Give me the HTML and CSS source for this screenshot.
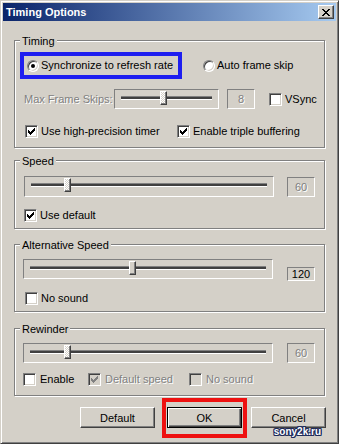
FILE: index.html
```html
<!DOCTYPE html>
<html lang="en">

<head>
    <meta charset="UTF-8">
    <meta name="viewport" content="width=device-width, initial-scale=1.0">
    <title>Timing Options</title>
    <link rel="stylesheet" href="styles.css">
</head>

<body>

    <div class="window">
        <div class="titlebar">
            <span class="title">Timing Options</span>
            <button class="close" type="button">
                <svg width="8" height="7" viewBox="0 0 8 7"><path d="M0 0h2v1H0z M6 0h2v1H6z M1 1h2v1H1z M5 1h2v1H5z M2 2h4v1H2z M3 3h2v1H3z M2 4h4v1H2z M1 5h2v1H1z M5 5h2v1H5z M0 6h2v1H0z M6 6h2v1H6z" fill="#000"/></svg>
            </button>
        </div>

        <div class="client">
            <!-- Timing -->
            <div class="group timing">
                <div class="group-title">Timing</div>
                <div class="row sync-row">
                    <div class="mark-blue">
                        <span class="opt"><span class="radio on"></span>Synchronize to refresh rate</span>
                    </div>
                    <span class="opt auto-skip"><span class="radio"></span>Auto frame skip</span>
                </div>
                <div class="row skips-row">
                    <span class="skips-label off">Max Frame Skips:</span>
                    <div class="slider skips off">
                        <div class="channel"></div>
                        <div class="thumb" style="left: 45px"></div>
                    </div>
                    <div class="edit skips-edit off">8</div>
                    <span class="opt vsync"><span class="check"></span>VSync</span>
                </div>
                <div class="row checks-row">
                    <span class="opt precision">
                        <span class="check"><svg width="7" height="7" viewBox="0 0 7 7"><path d="M0 2h1v3H0z M1 3h1v3H1z M2 4h1v3H2z M3 3h1v3H3z M4 2h1v3H4z M5 1h1v3H5z M6 0h1v3H6z" fill="#000"/></svg></span>Use high-precision timer
                    </span>
                    <span class="opt">
                        <span class="check"><svg width="7" height="7" viewBox="0 0 7 7"><path d="M0 2h1v3H0z M1 3h1v3H1z M2 4h1v3H2z M3 3h1v3H3z M4 2h1v3H4z M5 1h1v3H5z M6 0h1v3H6z" fill="#000"/></svg></span>Enable triple buffering
                    </span>
                </div>
            </div>

            <!-- Speed -->
            <div class="group speed">
                <div class="group-title">Speed</div>
                <div class="row slider-row">
                    <div class="slider wide off">
                        <div class="channel"></div>
                        <div class="thumb" style="left: 39px"></div>
                    </div>
                    <div class="edit off">60</div>
                </div>
                <div class="row check-row">
                    <span class="opt">
                        <span class="check"><svg width="7" height="7" viewBox="0 0 7 7"><path d="M0 2h1v3H0z M1 3h1v3H1z M2 4h1v3H2z M3 3h1v3H3z M4 2h1v3H4z M5 1h1v3H5z M6 0h1v3H6z" fill="#000"/></svg></span>Use default
                    </span>
                </div>
            </div>

            <!-- Alternative Speed -->
            <div class="group alt">
                <div class="group-title">Alternative Speed</div>
                <div class="row slider-row">
                    <div class="slider wide">
                        <div class="channel"></div>
                        <div class="thumb" style="left: 105px"></div>
                    </div>
                    <div class="edit static">120</div>
                </div>
                <div class="row check-row">
                    <span class="opt"><span class="check"></span>No sound</span>
                </div>
            </div>

            <!-- Rewinder -->
            <div class="group rewinder">
                <div class="group-title">Rewinder</div>
                <div class="row slider-row">
                    <div class="slider wide off">
                        <div class="channel"></div>
                        <div class="thumb" style="left: 40px"></div>
                    </div>
                    <div class="edit off">60</div>
                </div>
                <div class="row check-row">
                    <span class="opt enable"><span class="check"></span>Enable</span>
                    <span class="opt def-speed off">
                        <span class="check"><svg width="7" height="7" viewBox="0 0 7 7"><path d="M0 2h1v3H0z M1 3h1v3H1z M2 4h1v3H2z M3 3h1v3H3z M4 2h1v3H4z M5 1h1v3H5z M6 0h1v3H6z" fill="#808080"/></svg></span>Default speed
                    </span>
                    <span class="opt off"><span class="check"></span>No sound</span>
                </div>
            </div>

            <div class="buttons">
                <button class="btn" type="button">Default</button>
                <div class="mark-red">
                    <button class="btn default" type="button">OK</button>
                </div>
                <button class="btn" type="button">Cancel</button>
            </div>
        </div>

        <div class="watermark">sony2k.ru</div>
    </div>

</body>

</html>
```

FILE: styles.css
```css
* {
    box-sizing: border-box;
}

body {
    margin: 0;
    background: #d4d0c8;
    font-family: "Liberation Sans", Arial, sans-serif;
    font-size: 11px;
    color: #000;
}

/* window frame */
.window {
    position: relative;
    width: 339px;
    height: 444px;
    padding: 2px;
    background: #d4d0c8;
    border: 1px solid;
    border-color: #d4d0c8 #404040 #404040 #d4d0c8;
    box-shadow: inset 1px 1px #fff, inset -1px -1px #808080;
}

.titlebar {
    display: flex;
    align-items: center;
    height: 18px;
    padding: 0 2px 0 3px;
    background: linear-gradient(to right, #0a246a, #a6caf0);
}

.title {
    color: #fff;
    font-weight: bold;
    font-size: 11px;
}

.close {
    display: flex;
    align-items: center;
    justify-content: center;
    margin-left: auto;
    width: 16px;
    height: 14px;
    padding: 0;
    background: #d4d0c8;
    border: 1px solid;
    border-color: #fff #404040 #404040 #fff;
    box-shadow: inset -1px -1px #808080;
}

.client {
    padding: 0 11px;
}

/* group boxes */
.group {
    border: 1px solid #808080;
    box-shadow: inset 1px 1px #fff, 1px 1px #fff;
}

.group-title {
    width: fit-content;
    margin: -6px 0 0 5px;
    padding: 0 2px;
    line-height: 13px;
    background: #d4d0c8;
}

.timing {
    margin-top: 19px;
    padding-bottom: 9px;
}

.speed {
    margin-top: 12px;
    padding-bottom: 6px;
}

.alt {
    margin-top: 15px;
    padding-bottom: 6px;
}

.rewinder {
    margin-top: 16px;
    padding-bottom: 9px;
}

.row {
    display: flex;
    align-items: center;
}

.opt {
    display: flex;
    align-items: center;
    line-height: 13px;
    white-space: nowrap;
}

.off {
    color: #808080;
    text-shadow: 1px 1px #fff;
}

/* timing rows */
.sync-row {
    height: 27px;
    margin-top: 4px;
}

.mark-blue {
    display: flex;
    align-items: center;
    width: 162px;
    height: 27px;
    margin-left: 5px;
    padding-left: 3px;
    border: 4px solid #1e1ef0;
}

.auto-skip {
    margin-left: 21px;
}

.skips-row {
    height: 20px;
    margin-top: 10px;
}

.skips-label {
    width: 90px;
    margin-left: 9px;
}

.skips-edit {
    margin-left: 8px;
}

.vsync {
    margin-left: 14px;
}

.checks-row {
    height: 13px;
    margin-top: 16px;
    padding-left: 10px;
}

.precision {
    width: 152px;
}

/* radio and check */
.radio {
    position: relative;
    flex: none;
    width: 12px;
    height: 12px;
    margin-right: 2px;
    border-radius: 50%;
    background: #fff;
    border: 1px solid;
    border-color: #808080 #fff #fff #808080;
    box-shadow: inset 1px 1px #404040, inset -1px -1px #d4d0c8;
}

.radio.on::after {
    content: "";
    position: absolute;
    left: 3px;
    top: 3px;
    width: 4px;
    height: 4px;
    border-radius: 50%;
    background: #000;
}

.check {
    display: flex;
    align-items: center;
    justify-content: center;
    flex: none;
    width: 13px;
    height: 13px;
    margin-right: 3px;
    background: #fff;
    border: 1px solid;
    border-color: #808080 #fff #fff #808080;
    box-shadow: inset 1px 1px #404040, inset -1px -1px #d4d0c8;
}

.off .check {
    background: #d4d0c8;
}

/* trackbars */
.slider {
    position: relative;
    height: 20px;
    padding: 6px 6px 0;
    border: 1px solid;
    border-color: #808080 #fff #fff #808080;
}

.skips {
    width: 105px;
}

.wide {
    width: 250px;
}

.channel {
    height: 4px;
    background: #404040;
    border-top: 1px solid #808080;
    border-bottom: 1px solid #fff;
}

.thumb {
    position: absolute;
    top: 1px;
    width: 7px;
    height: 14px;
    background: #d4d0c8;
    border: 1px solid;
    border-color: #fff #404040 #404040 #fff;
    box-shadow: inset -1px -1px #808080;
}

.slider.off .thumb {
    background: repeating-conic-gradient(#fff 0% 25%, #d4d0c8 0% 50%) 0 0 / 2px 2px;
}

.edit {
    flex: none;
    width: 28px;
    height: 20px;
    line-height: 18px;
    text-align: center;
    border: 1px solid;
    border-color: #808080 #fff #fff #808080;
}

/* speed / alt / rewinder rows */
.slider-row {
    margin-top: 7px;
    padding-left: 8px;
}

.speed .slider-row {
    margin-top: 8px;
    padding-left: 9px;
}

.speed .slider {
    height: 21px;
}

.slider-row .edit {
    margin-left: 13px;
}

.alt .slider-row,
.rewinder .slider-row {
    align-items: flex-start;
}

.alt .slider-row .edit,
.rewinder .slider-row .edit {
    margin-left: 14px;
}

.edit.static {
    height: 14px;
    margin-top: 8px;
    line-height: 12px;
}

.check-row {
    height: 13px;
    margin-top: 12px;
    padding-left: 9px;
}

.alt .check-row {
    margin-top: 11px;
    padding-left: 10px;
}

.rewinder .check-row {
    margin-top: 10px;
    padding-left: 8px;
}

.enable {
    width: 65px;
}

.def-speed {
    width: 101px;
}

.rewinder .check {
    margin-right: 4px;
}

/* buttons */
.buttons {
    display: flex;
    justify-content: flex-end;
    align-items: flex-start;
    height: 40px;
    margin-top: 2px;
    margin-right: -1px;
}

.btn {
    width: 75px;
    height: 21px;
    margin-top: 9px;
    padding: 0;
    font-family: inherit;
    font-size: 11px;
    color: #000;
    background: #d4d0c8;
    border: 1px solid;
    border-color: #fff #404040 #404040 #fff;
    box-shadow: inset -1px -1px #808080;
}

.btn.default {
    margin-top: 0;
    border-color: #000;
    box-shadow: inset 1px 1px #fff, inset -1px -1px #404040, inset -2px -2px #808080;
}

.mark-red {
    width: 85px;
    height: 40px;
    margin: 0 4px 0 7px;
    padding: 5px 1px 0;
    border: 4px solid #ee1111;
}

.watermark {
    position: absolute;
    right: 17px;
    bottom: 6px;
    font-size: 10px;
    font-weight: bold;
    line-height: 10px;
    color: #fff;
    text-shadow: 1px 0 #1c2a5a, -1px 0 #1c2a5a, 0 1px #1c2a5a, 0 -1px #1c2a5a, 1px 1px #1c2a5a, -1px -1px #1c2a5a, 1px -1px #1c2a5a, -1px 1px #1c2a5a;
}
```
